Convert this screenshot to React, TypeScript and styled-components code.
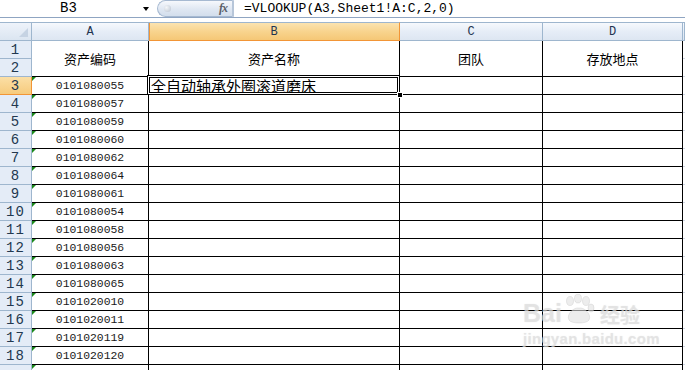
import styled, { createGlobalStyle } from 'styled-components';

const GlobalStyle = createGlobalStyle`
    html, body {
        margin: 0;
        padding: 0;
        background: #ffffff;
        overflow: hidden;
    }
    body {
        font-family: "Liberation Mono", "Noto Sans CJK SC", monospace;
    }
`;

const StyledPage = styled.div`
    position: relative;
    width: 685px;
    height: 370px;
    overflow: hidden;
    background: #ffffff;
`;

const StyledFormulaBar = styled.div`
    display: flex;
    align-items: center;
    height: 18px;
    box-sizing: border-box;
    border-bottom: 1px solid #8fa5c2;
    margin-bottom: 4px;
`;

const StyledNameBox = styled.div`
    width: 137px;
    text-align: center;
    font-size: 14px;
    color: #000;
    line-height: 17px;
`;

const StyledArrow = styled.div`
    width: 0;
    height: 0;
    margin-left: 6px;
    border-left: 3px solid transparent;
    border-right: 3px solid transparent;
    border-top: 4px solid #000;
`;

const StyledFxButton = styled.div`
    display: flex;
    align-items: center;
    justify-content: space-between;
    box-sizing: border-box;
    width: 77px;
    height: 17px;
    margin-left: 8px;
    padding: 0 5px 0 6px;
    border: 1px solid #a6b9d1;
    border-right: 2px solid #b7c6d9;
    border-radius: 9px 0 0 9px;
    background: linear-gradient(#f6f8fc, #dfe7f2 55%, #d3deec);
`;

const StyledDot = styled.div`
    width: 7px;
    height: 7px;
    border-radius: 50%;
    background: radial-gradient(circle at 35% 35%, #f4f6f9, #b9c3d0);
`;

const StyledFx = styled.span`
    font-family: "Liberation Serif", serif;
    font-style: italic;
    font-weight: bold;
    font-size: 12px;
    color: #5c6068;
    letter-spacing: -1px;
`;

const StyledFormula = styled.div`
    padding-left: 10px;
    font-size: 13px;
    line-height: 17px;
    color: #000;
    white-space: nowrap;
`;

const StyledSheet = styled.div`
    display: grid;
    grid-template-columns: 32px 117px 251px 143px 140px 1fr;
    grid-template-rows: 19px repeat(19, 18px);
`;

const StyledCorner = styled.div`
    position: relative;
    box-sizing: border-box;
    border-top: 1px solid #9eb6ce;
    border-right: 1px solid #9eb6ce;
    border-bottom: 1px solid #9eb6ce;
    background: linear-gradient(#eef3fa, #dbe5f1);
    &::after {
        content: '';
        position: absolute;
        right: 3px;
        bottom: 3px;
        width: 0;
        height: 0;
        border-left: 9px solid transparent;
        border-bottom: 9px solid #c6d3e3;
    }
`;

const StyledColHead = styled.div<{ $active?: boolean }>`
    box-sizing: border-box;
    display: flex;
    align-items: center;
    justify-content: center;
    font-size: 12px;
    color: #1f3450;
    border-top: 1px solid #9eb6ce;
    border-right: 1px solid ${(p) => (p.$active ? '#f29536' : '#9eb6ce')};
    border-bottom: 1px solid ${(p) => (p.$active ? '#f29536' : '#9eb6ce')};
    box-shadow: ${(p) => (p.$active ? 'inset 1px 0 0 #f29536' : 'none')};
    background: ${(p) =>
        p.$active
            ? 'linear-gradient(#fbe3b0, #f8d48e 50%, #f5c776)'
            : 'linear-gradient(#f6f9fd, #e6edf7 50%, #dde6f2)'};
`;

const StyledRowHead = styled.div<{ $active?: boolean }>`
    box-sizing: border-box;
    display: flex;
    align-items: center;
    justify-content: center;
    padding-top: 1px;
    font-size: 14px;
    letter-spacing: 1px;
    color: #22384f;
    border-right: 1px solid ${(p) => (p.$active ? '#f29536' : '#9eb6ce')};
    border-bottom: 1px solid ${(p) => (p.$active ? '#f29536' : '#9eb6ce')};
    background: ${(p) =>
        p.$active ? 'linear-gradient(#fbdfa6, #f6cb7d)' : '#e4ecf7'};
`;

const StyledTitleCell = styled.div`
    grid-row: span 2;
    box-sizing: border-box;
    display: flex;
    align-items: center;
    justify-content: center;
    font-family: "Noto Sans CJK SC", sans-serif;
    font-size: 13px;
    color: #000;
    border-right: 1px solid #000;
    border-bottom: 1px solid #000;
`;

const StyledCell = styled.div<{ $flag?: boolean; $faint?: boolean }>`
    position: relative;
    box-sizing: border-box;
    display: flex;
    align-items: center;
    justify-content: center;
    padding-top: 1px;
    font-size: 11.4px;
    color: #1a1a1a;
    border-right: ${(p) => (p.$faint ? 'none' : '1px solid #000')};
    border-bottom: 1px solid ${(p) => (p.$faint ? '#d0d7e5' : '#000')};
    &::before {
        content: '';
        display: ${(p) => (p.$flag ? 'block' : 'none')};
        position: absolute;
        left: 0;
        top: 0;
        width: 0;
        height: 0;
        border-top: 4px solid #1b8a1b;
        border-right: 4px solid transparent;
    }
`;

const StyledActiveCell = styled(StyledCell)`
    justify-content: flex-start;
    padding: 0 0 0 2px;
    font-family: "Noto Sans CJK SC", sans-serif;
    font-size: 15px;
    color: #000;
    z-index: 2;
`;

const StyledFrame = styled.div`
    position: absolute;
    left: -2px;
    top: -2px;
    right: -1px;
    bottom: -1px;
    border: 1px solid #000;
    box-shadow: inset 0 0 0 1px #fff, inset 0 0 0 2px #000;
    pointer-events: none;
`;

const StyledHandle = styled.div`
    position: absolute;
    right: -4px;
    bottom: -4px;
    width: 4px;
    height: 4px;
    background: #000;
    border: 1px solid #fff;
`;

const StyledWatermark = styled.div`
    position: absolute;
    left: 523px;
    top: 294px;
    display: flex;
    flex-direction: column;
    align-items: flex-start;
    color: rgba(225, 225, 225, 0.6);
    text-shadow: 0 0 1px rgba(180, 180, 180, 0.35);
    pointer-events: none;
`;

const StyledMarkLine = styled.div`
    display: flex;
    align-items: flex-end;
    font-family: "Liberation Sans", sans-serif;
    font-weight: bold;
    font-size: 25px;
    line-height: 25px;
`;

const StyledMarkCn = styled.span`
    margin-left: 4px;
    font-family: "Noto Sans CJK SC", sans-serif;
    font-size: 20px;
    line-height: 22px;
`;

const StyledMarkUrl = styled.div`
    margin-top: 4px;
    font-family: "Liberation Sans", sans-serif;
    font-weight: bold;
    font-size: 15px;
    letter-spacing: 0.3px;
`;

const codes = [
    '0101080055', '0101080057', '0101080059', '0101080060',
    '0101080062', '0101080064', '0101080061', '0101080054',
    '0101080058', '0101080056', '0101080063', '0101080065',
    '0101020010', '0101020011', '0101020119', '0101020120', '',
];

function Paw() {
    return (
        <svg width="34" height="30" viewBox="0 0 34 30" style={{ marginBottom: 2 }}>
            <g fill="rgba(225,225,225,0.6)" stroke="rgba(180,180,180,0.35)" strokeWidth="0.8">
                <ellipse cx="8" cy="7" rx="3.5" ry="4.5" />
                <ellipse cx="16" cy="4.5" rx="3.5" ry="4.5" />
                <ellipse cx="24" cy="7" rx="3.5" ry="4.5" />
                <ellipse cx="29" cy="14" rx="3" ry="4" />
                <path d="M7 26 C4 20 12 13 17 14 C22 13 30 20 27 26 C25 30 9 30 7 26 Z" />
            </g>
        </svg>
    );
}

export default function App() {
    return (
        <StyledPage>
            <GlobalStyle />
            <StyledFormulaBar>
                <StyledNameBox>B3</StyledNameBox>
                <StyledArrow />
                <StyledFxButton>
                    <StyledDot />
                    <StyledFx>fx</StyledFx>
                </StyledFxButton>
                <StyledFormula>=VLOOKUP(A3,Sheet1!A:C,2,0)</StyledFormula>
            </StyledFormulaBar>

            <StyledSheet>
                <StyledCorner />
                <StyledColHead>A</StyledColHead>
                <StyledColHead $active>B</StyledColHead>
                <StyledColHead>C</StyledColHead>
                <StyledColHead>D</StyledColHead>
                <StyledColHead />

                <StyledRowHead>1</StyledRowHead>
                <StyledTitleCell>资产编码</StyledTitleCell>
                <StyledTitleCell>资产名称</StyledTitleCell>
                <StyledTitleCell>团队</StyledTitleCell>
                <StyledTitleCell>存放地点</StyledTitleCell>
                <StyledCell $faint />
                <StyledRowHead>2</StyledRowHead>
                <StyledCell $faint />

                {codes.map((code, i) => {
                    const row = i + 3;
                    return [
                        <StyledRowHead key={`h${row}`} $active={row === 3}>
                            {row < 19 ? row : ''}
                        </StyledRowHead>,
                        <StyledCell key={`a${row}`} $flag>{code}</StyledCell>,
                        row === 3 ? (
                            <StyledActiveCell key={`b${row}`}>
                                全自动轴承外圈滚道磨床
                                <StyledFrame />
                                <StyledHandle />
                            </StyledActiveCell>
                        ) : (
                            <StyledCell key={`b${row}`} />
                        ),
                        <StyledCell key={`c${row}`} />,
                        <StyledCell key={`d${row}`} />,
                        <StyledCell key={`e${row}`} $faint />,
                    ];
                })}
            </StyledSheet>

            <StyledWatermark>
                <StyledMarkLine>
                    Bai
                    <Paw />
                    <StyledMarkCn>经验</StyledMarkCn>
                </StyledMarkLine>
                <StyledMarkUrl>jingyan.baidu.com</StyledMarkUrl>
            </StyledWatermark>
        </StyledPage>
    );
}
